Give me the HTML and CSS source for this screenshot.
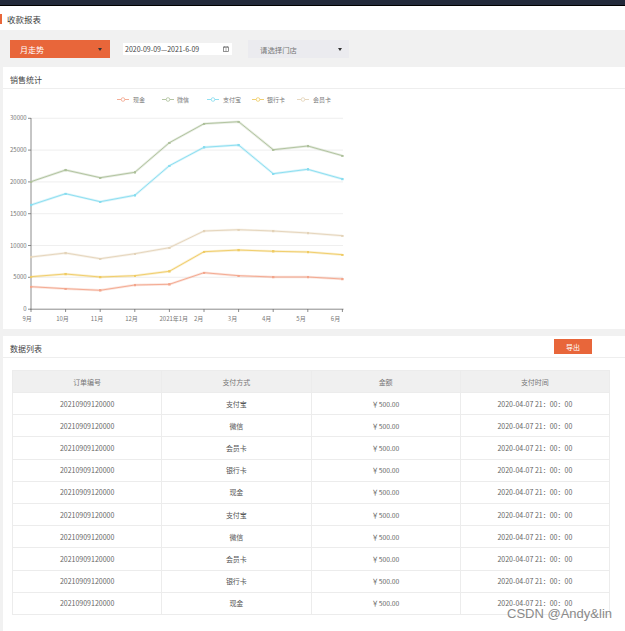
FILE: index.html
```html
<!DOCTYPE html>
<html lang="zh-CN">
<head>
<meta charset="utf-8">
<title>收款报表</title>
<link rel="stylesheet" href="styles.css">
</head>
<body>
<div class="topbar"></div>
<div class="page-title"><span class="mark"></span><span class="title-text">收款报表</span></div>
<div class="toolbar">
  <div class="sel sel-primary"><span>月走势</span><span class="caret"></span></div>
  <div class="date-input"><span>2020-09-09—2021-6-09</span>
    <svg class="cal" width="6" height="6" viewBox="0 0 6 6"><rect x="0.5" y="1" width="5" height="4.5" fill="none" stroke="#666" stroke-width="0.7"/><line x1="1.8" y1="0" x2="1.8" y2="2" stroke="#666" stroke-width="0.7"/><line x1="4.2" y1="0" x2="4.2" y2="2" stroke="#666" stroke-width="0.7"/><line x1="3" y1="1" x2="3" y2="5.5" stroke="#666" stroke-width="0.5"/></svg>
  </div>
  <div class="sel sel-store"><span>请选择门店</span><span class="caret"></span></div>
</div>

<section class="card chart-card">
  <div class="card-head"><span class="card-title">销售统计</span></div>
  <svg class="chart" width="622" height="240" viewBox="3 89 622 240">
    <defs>
      <marker id="m1" markerWidth="3" markerHeight="3" refX="1.2" refY="1.2" markerUnits="userSpaceOnUse"><rect width="2.4" height="2.4" fill="#f3a58b"/></marker>
      <marker id="m2" markerWidth="3" markerHeight="3" refX="1.2" refY="1.2" markerUnits="userSpaceOnUse"><rect width="2.4" height="2.4" fill="#adc09a"/></marker>
      <marker id="m3" markerWidth="3" markerHeight="3" refX="1.2" refY="1.2" markerUnits="userSpaceOnUse"><rect width="2.4" height="2.4" fill="#86dcef"/></marker>
      <marker id="m4" markerWidth="3" markerHeight="3" refX="1.2" refY="1.2" markerUnits="userSpaceOnUse"><rect width="2.4" height="2.4" fill="#efcb62"/></marker>
      <marker id="m5" markerWidth="3" markerHeight="3" refX="1.2" refY="1.2" markerUnits="userSpaceOnUse"><rect width="2.4" height="2.4" fill="#e3d3b8"/></marker>
    </defs>

    <g class="legend">
      <line x1="117" y1="99.5" x2="129" y2="99.5" stroke="#f3a58b"/><circle cx="123" cy="99.5" r="1.8" fill="#fff" stroke="#f3a58b" stroke-width="0.8"/><text x="133" y="101.6">现金</text>
      <line x1="162" y1="99.5" x2="174" y2="99.5" stroke="#adc09a"/><circle cx="168" cy="99.5" r="1.8" fill="#fff" stroke="#adc09a" stroke-width="0.8"/><text x="177" y="101.6">微信</text>
      <line x1="207" y1="99.5" x2="219" y2="99.5" stroke="#86dcef"/><circle cx="213" cy="99.5" r="1.8" fill="#fff" stroke="#86dcef" stroke-width="0.8"/><text x="223" y="101.6">支付宝</text>
      <line x1="252" y1="99.5" x2="264" y2="99.5" stroke="#efcb62"/><circle cx="258" cy="99.5" r="1.8" fill="#fff" stroke="#efcb62" stroke-width="0.8"/><text x="267" y="101.6">银行卡</text>
      <line x1="297" y1="99.5" x2="309" y2="99.5" stroke="#e3d3b8"/><circle cx="303" cy="99.5" r="1.8" fill="#fff" stroke="#e3d3b8" stroke-width="0.8"/><text x="313" y="101.6">会员卡</text>
    </g>

    <g class="grid">
      <line x1="31" y1="118.3" x2="343" y2="118.3"/>
      <line x1="31" y1="150.1" x2="343" y2="150.1"/>
      <line x1="31" y1="181.9" x2="343" y2="181.9"/>
      <line x1="31" y1="213.7" x2="343" y2="213.7"/>
      <line x1="31" y1="245.5" x2="343" y2="245.5"/>
      <line x1="31" y1="277.3" x2="343" y2="277.3"/>
    </g>

    <g class="axis">
      <line x1="31" y1="118" x2="31" y2="309.5"/>
      <line x1="30.5" y1="309.2" x2="343.5" y2="309.2"/>
      <line x1="28" y1="118.3" x2="31" y2="118.3"/>
      <line x1="28" y1="150.1" x2="31" y2="150.1"/>
      <line x1="28" y1="181.9" x2="31" y2="181.9"/>
      <line x1="28" y1="213.7" x2="31" y2="213.7"/>
      <line x1="28" y1="245.5" x2="31" y2="245.5"/>
      <line x1="28" y1="277.3" x2="31" y2="277.3"/>
      <line x1="28" y1="309.2" x2="31" y2="309.2"/>
      <line x1="31" y1="309" x2="31" y2="312"/>
      <line x1="65.6" y1="309" x2="65.6" y2="312"/>
      <line x1="100.2" y1="309" x2="100.2" y2="312"/>
      <line x1="134.8" y1="309" x2="134.8" y2="312"/>
      <line x1="169.4" y1="309" x2="169.4" y2="312"/>
      <line x1="204" y1="309" x2="204" y2="312"/>
      <line x1="238.6" y1="309" x2="238.6" y2="312"/>
      <line x1="273.2" y1="309" x2="273.2" y2="312"/>
      <line x1="307.8" y1="309" x2="307.8" y2="312"/>
      <line x1="342.4" y1="309" x2="342.4" y2="312"/>
    </g>

    <g class="ylabels">
      <text x="26.7" y="120.4">30000</text>
      <text x="26.7" y="152.2">25000</text>
      <text x="26.7" y="184">20000</text>
      <text x="26.7" y="215.8">15000</text>
      <text x="26.7" y="247.6">10000</text>
      <text x="26.7" y="279.4">5000</text>
      <text x="26.7" y="311.3">0</text>
    </g>

    <g class="xlabels">
      <text x="27.2" y="320.6">9月</text>
      <text x="62.5" y="320.6">10月</text>
      <text x="97" y="320.6">11月</text>
      <text x="131.5" y="320.6">12月</text>
      <text x="173.8" y="320.6">2021年1月</text>
      <text x="198.7" y="320.6">2月</text>
      <text x="232.5" y="320.6">3月</text>
      <text x="266.7" y="320.6">4月</text>
      <text x="301" y="320.6">5月</text>
      <text x="335.5" y="320.6">6月</text>
    </g>

    <g class="series">
      <polyline class="halo" stroke="#f3a58b" points="31,286.7 65.6,288.7 100.2,290.3 134.8,285 169.4,284.3 204,272.7 238.6,275.7 273.2,277 307.8,277 342.4,279"/>
      <polyline class="halo" stroke="#adc09a" points="31,181.7 65.6,170 100.2,177.7 134.8,172.3 169.4,142.7 204,123.7 238.6,121.7 273.2,149.7 307.8,146 342.4,155.7"/>
      <polyline class="halo" stroke="#86dcef" points="31,205 65.6,193.7 100.2,201.7 134.8,195.3 169.4,165.7 204,147.3 238.6,145 273.2,173.7 307.8,169.3 342.4,179"/>
      <polyline class="halo" stroke="#efcb62" points="31,276.7 65.6,274 100.2,277 134.8,275.7 169.4,271.3 204,251.7 238.6,250 273.2,251.3 307.8,252 342.4,254.7"/>
      <polyline class="halo" stroke="#e3d3b8" points="31,257 65.6,253 100.2,258.7 134.8,253.7 169.4,247.7 204,231 238.6,229.7 273.2,231 307.8,233 342.4,235.7"/>

      <polyline class="line" stroke="#f3a58b" marker-start="url(#m1)" marker-mid="url(#m1)" marker-end="url(#m1)" points="31,286.7 65.6,288.7 100.2,290.3 134.8,285 169.4,284.3 204,272.7 238.6,275.7 273.2,277 307.8,277 342.4,279"/>
      <polyline class="line" stroke="#adc09a" marker-start="url(#m2)" marker-mid="url(#m2)" marker-end="url(#m2)" points="31,181.7 65.6,170 100.2,177.7 134.8,172.3 169.4,142.7 204,123.7 238.6,121.7 273.2,149.7 307.8,146 342.4,155.7"/>
      <polyline class="line" stroke="#86dcef" marker-start="url(#m3)" marker-mid="url(#m3)" marker-end="url(#m3)" points="31,205 65.6,193.7 100.2,201.7 134.8,195.3 169.4,165.7 204,147.3 238.6,145 273.2,173.7 307.8,169.3 342.4,179"/>
      <polyline class="line" stroke="#efcb62" marker-start="url(#m4)" marker-mid="url(#m4)" marker-end="url(#m4)" points="31,276.7 65.6,274 100.2,277 134.8,275.7 169.4,271.3 204,251.7 238.6,250 273.2,251.3 307.8,252 342.4,254.7"/>
      <polyline class="line" stroke="#e3d3b8" marker-start="url(#m5)" marker-mid="url(#m5)" marker-end="url(#m5)" points="31,257 65.6,253 100.2,258.7 134.8,253.7 169.4,247.7 204,231 238.6,229.7 273.2,231 307.8,233 342.4,235.7"/>
    </g>
  </svg>
</section>

<section class="card list-card">
  <div class="card-head"><span class="card-title">数据列表</span><button class="btn-export">导出</button></div>
  <div class="table-wrap">
    <table>
      <thead>
        <tr><th>订单编号</th><th>支付方式</th><th>金额</th><th>支付时间</th></tr>
      </thead>
      <tbody>
        <tr><td>20210909120000</td><td class="cn">支付宝</td><td class="amt">￥500.00</td><td>2020-04-07 21：00：00</td></tr>
        <tr><td>20210909120000</td><td class="cn">微信</td><td class="amt">￥500.00</td><td>2020-04-07 21：00：00</td></tr>
        <tr><td>20210909120000</td><td class="cn">会员卡</td><td class="amt">￥500.00</td><td>2020-04-07 21：00：00</td></tr>
        <tr><td>20210909120000</td><td class="cn">银行卡</td><td class="amt">￥500.00</td><td>2020-04-07 21：00：00</td></tr>
        <tr><td>20210909120000</td><td class="cn">现金</td><td class="amt">￥500.00</td><td>2020-04-07 21：00：00</td></tr>
        <tr><td>20210909120000</td><td class="cn">支付宝</td><td class="amt">￥500.00</td><td>2020-04-07 21：00：00</td></tr>
        <tr><td>20210909120000</td><td class="cn">微信</td><td class="amt">￥500.00</td><td>2020-04-07 21：00：00</td></tr>
        <tr><td>20210909120000</td><td class="cn">会员卡</td><td class="amt">￥500.00</td><td>2020-04-07 21：00：00</td></tr>
        <tr><td>20210909120000</td><td class="cn">银行卡</td><td class="amt">￥500.00</td><td>2020-04-07 21：00：00</td></tr>
        <tr><td>20210909120000</td><td class="cn">现金</td><td class="amt">￥500.00</td><td>2020-04-07 21：00：00</td></tr>
      </tbody>
    </table>
  </div>
</section>

<div class="watermark">CSDN @Andy&amp;lin</div>
</body>
</html>
```

FILE: styles.css
```css
* { box-sizing: border-box; }
html, body { margin: 0; padding: 0; }
body {
  position: relative;
  width: 625px;
  height: 631px;
  overflow: hidden;
  background: #f1f1f1;
  font-family: "Noto Sans CJK SC", "Noto Sans", sans-serif;
  color: #333;
}

.topbar {
  height: 6px;
  background: #232a3b;
  border-bottom: 1px solid #000;
}

.page-title {
  height: 24px;
  background: #fff;
  display: flex;
  align-items: center;
}
.mark {
  width: 2px;
  height: 10px;
  margin-top: 1px;
  margin-right: 5px;
  background: #e8663a;
}
.title-text {
  font-size: 8.5px;
  line-height: 12px;
  margin-top: 2px;
  color: #3a3a3a;
}

.toolbar {
  display: flex;
  align-items: center;
  padding: 10px 10px 9px;
}
.sel {
  height: 18px;
  display: flex;
  align-items: center;
  justify-content: space-between;
}
.sel-primary {
  width: 100px;
  margin-right: 13px;
  padding: 0 8px 0 10px;
  background: #e8663a;
  color: #fff;
  font-size: 8px;
}
.sel-store {
  width: 101px;
  padding: 0 7px 0 12px;
  background: #ebebef;
  color: #777;
  font-size: 7.4px;
}
.caret {
  width: 0;
  height: 0;
  border-top: 3px solid #333;
  border-left: 2.5px solid transparent;
  border-right: 2.5px solid transparent;
}
.date-input {
  width: 109px;
  height: 12.5px;
  margin-right: 16px;
  padding: 0 3px 0 2px;
  background: #fff;
  display: flex;
  align-items: center;
  justify-content: space-between;
  font-size: 7px;
  color: #444;
}
.cal { display: block; }

.card {
  background: #fff;
  margin-left: 3px;
}
.chart-card { height: 262px; }
.list-card {
  margin-top: 7px;
  padding-bottom: 30px;
}
.card-head {
  height: 22px;
  border-bottom: 1px solid #eeeeee;
  display: flex;
  align-items: flex-start;
  justify-content: space-between;
  padding: 0 33px 0 7px;
}
.card-title {
  padding-top: 5px;
  font-size: 8px;
  line-height: 16px;
  color: #444;
}
.btn-export {
  margin-top: 3px;
  width: 38px;
  height: 15px;
  padding: 0;
  border: 0;
  background: #e8663a;
  color: #fff;
  font-family: inherit;
  font-size: 7px;
}

.chart { display: block; }
.chart text {
  font-family: "Noto Sans CJK SC", "Noto Sans", sans-serif;
  font-size: 6px;
  fill: #777;
}
.legend line { stroke-width: 0.9; }
.grid line { stroke: #ebebeb; stroke-width: 0.8; }
.axis line { stroke: #6e6e6e; stroke-width: 0.8; }
.ylabels text { text-anchor: end; }
.xlabels text { text-anchor: middle; }
.series polyline { fill: none; stroke-linejoin: round; }
.series .halo { stroke-width: 2.4; stroke-opacity: 0.3; }
.series .line { stroke-width: 0.9; }

.table-wrap { padding: 12px 15px 0 9px; }
table {
  width: 100%;
  border-collapse: collapse;
  table-layout: fixed;
  font-size: 7px;
  color: #666;
}
th, td {
  border: 1px solid #ececec;
  text-align: center;
  padding: 0;
  font-weight: normal;
}
th {
  height: 22px;
  background: #f0f0f0;
  color: #777;
}
td { height: 22.2px; }
td.cn { color: #555; }
td.amt { font-size: 6.8px; }

.watermark {
  position: absolute;
  right: 13px;
  top: 606px;
  font-family: "Liberation Sans", Arial, sans-serif;
  font-size: 13px;
  color: #8a8a8a;
}
```
